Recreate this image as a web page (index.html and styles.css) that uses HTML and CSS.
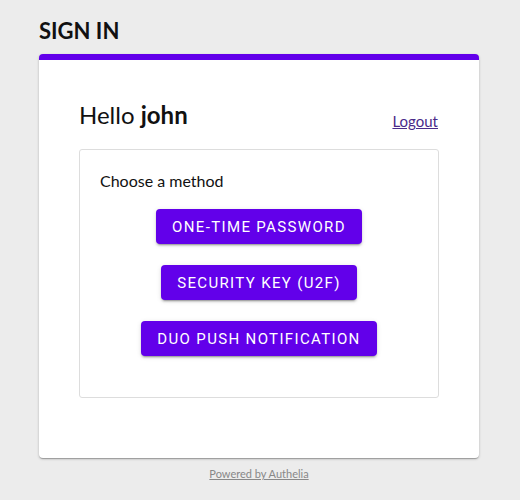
FILE: index.html
```html
<!DOCTYPE html>
<html>
<head>
<meta charset="utf-8">
<link rel="stylesheet" href="styles.css">
</head>
<body>
<div class="page">
  <h1 class="title">SIGN IN</h1>
  <div class="card">
    <div class="card-body">
      <div class="hello-row">
        <div class="hello">Hello <b>john</b></div>
        <a class="logout" href="#">Logout</a>
      </div>
      <div class="methods">
        <div class="choose">Choose a method</div>
        <div class="btns">
          <button class="btn">ONE-TIME PASSWORD</button>
          <button class="btn">SECURITY KEY (U2F)</button>
          <button class="btn">DUO PUSH NOTIFICATION</button>
        </div>
      </div>
    </div>
  </div>
  <div class="footer"><a href="#">Powered by Authelia</a></div>
</div>
</body>
</html>
```
FILE: styles.css
```css
html, body {
  margin: 0;
  padding: 0;
  background: #ececec;
}
body {
  font-family: Lato, "Noto Sans", sans-serif;
  color: #111;
}
.page {
  width: 440px;
  margin-left: calc(50% - 221px);
  padding-top: 17px;
}
.title {
  margin: 0 0 10px 0;
  font-size: 22px;
  line-height: 27px;
  font-weight: 700;
  color: #111;
}
.card {
  width: 440px;
  background: #fff;
  border-top: 6px solid #6200ea;
  border-radius: 4px;
  box-shadow: 0 1px 3px rgba(0,0,0,0.2), 0 1px 1px rgba(0,0,0,0.14), 0 2px 1px -1px rgba(0,0,0,0.12);
}
.card-body {
  padding: 40px 40px 60px 40px;
}
.hello-row {
  display: flex;
  justify-content: space-between;
  align-items: flex-end;
  height: 30px;
  margin-bottom: 19px;
}
.hello {
  font-size: 24px;
  line-height: 30px;
}
.hello b { font-weight: 700; }
.logout {
  font-size: 15px;
  line-height: 20px;
  color: #4a2a8a;
  text-decoration: underline;
  margin-right: 1px;
  margin-bottom: -1px;
}
.methods {
  border: 1px solid #ddd;
  border-radius: 3px;
  padding: 20px 20px 41px 20px;
}
.choose {
  font-size: 16px;
  line-height: 22px;
  margin-bottom: 17px;
}
.btns {
  display: flex;
  flex-direction: column;
  align-items: center;
  gap: 21px;
}
.btn {
  font-family: Roboto, sans-serif;
  font-size: 15px;
  font-weight: 400;
  letter-spacing: 1.35px;
  color: #fff;
  background: #6200ea;
  border: none;
  border-radius: 4px;
  height: 35px;
  padding: 0 16px;
  box-shadow: 0 3px 1px -2px rgba(0,0,0,0.2), 0 2px 2px 0 rgba(0,0,0,0.14), 0 1px 5px 0 rgba(0,0,0,0.12);
}
.footer {
  text-align: center;
  margin-top: 9px;
  font-size: 11px;
}
.footer a {
  color: #888;
  text-decoration: underline;
}
```
